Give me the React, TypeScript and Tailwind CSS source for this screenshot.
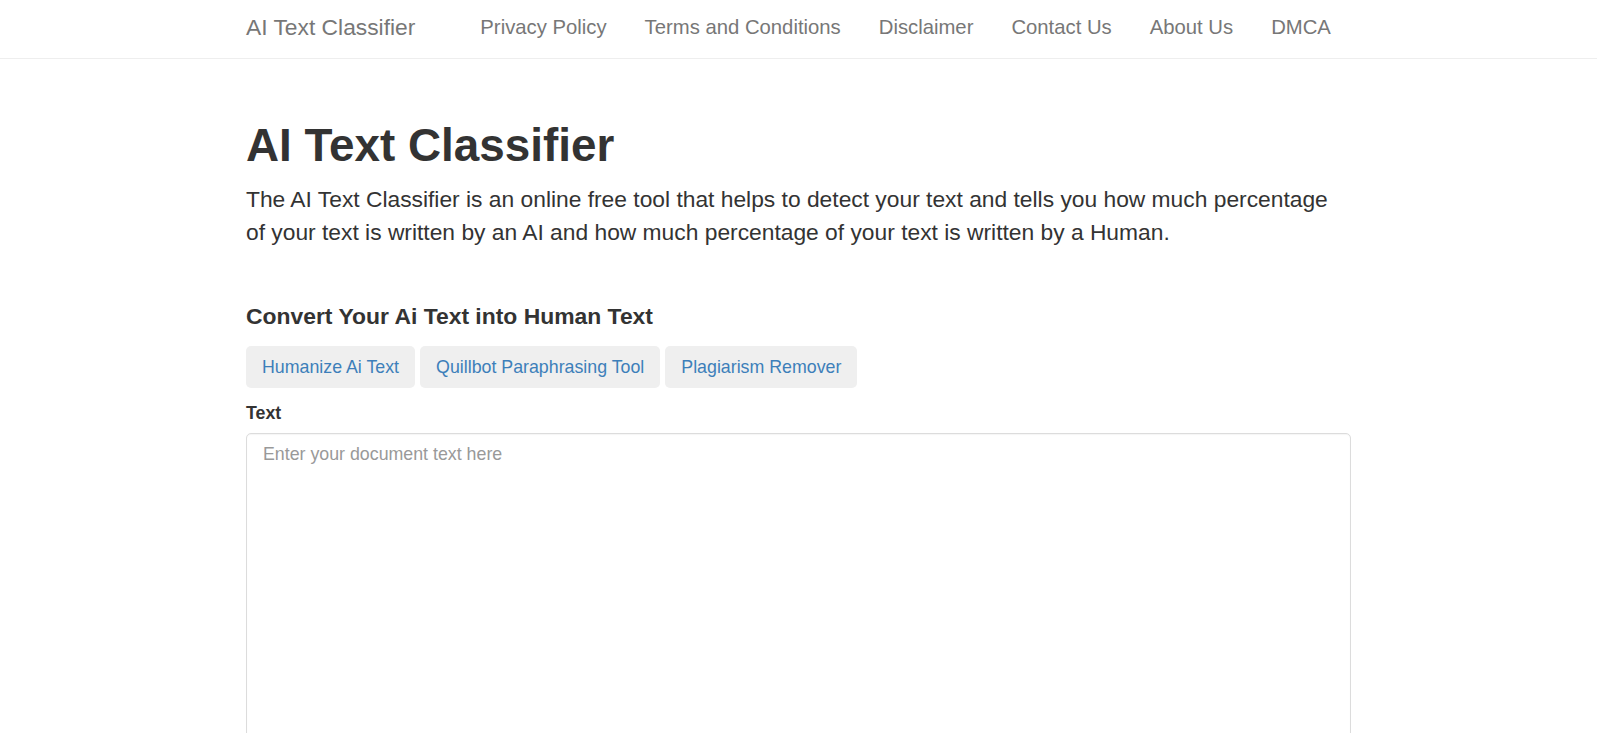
import { useState } from "react"

const navLinks = ["Privacy Policy", "Terms and Conditions", "Disclaimer", "Contact Us", "About Us", "DMCA"]

const tools = ["Humanize Ai Text", "Quillbot Paraphrasing Tool", "Plagiarism Remover"]

export default function App() {
    const [text, setText] = useState("")

    return (
        <div className="min-h-screen bg-white font-['Liberation_Sans',Arial,sans-serif] text-[#333]">
            {/* Navbar */}
            <nav className="h-[59px] border-b border-[#eeeeee] bg-white">
                <div className="mx-auto flex h-[58px] w-[1105px] items-center whitespace-nowrap pb-[4px]">
                    <a href="#" className="shrink-0 text-[22.8px] leading-none text-[#777]">
                        AI Text Classifier
                    </a>
                    <ul className="ml-[46px] flex shrink-0 items-center">
                        {navLinks.map((link) => (
                            <li key={link} className="shrink-0">
                                <a href="#" className="block whitespace-nowrap px-[19px] text-[20.3px] leading-none text-[#777]">
                                    {link}
                                </a>
                            </li>
                        ))}
                    </ul>
                </div>
            </nav>

            {/* Main */}
            <main className="mx-auto w-[1105px]">
                <h1 className="mt-[62px] text-[45.8px] font-bold leading-[49px]">AI Text Classifier</h1>
                <p className="mt-[13px] text-[22.8px] leading-[32.6px]">
                    The AI Text Classifier is an online free tool that helps to detect your text and tells you how much
                    percentage of your text is written by an AI and how much percentage of your text is written by a Human.
                </p>

                <h3 className="mt-[56px] text-[22.9px] font-bold leading-[25px]">Convert Your Ai Text into Human Text</h3>

                <div className="mt-[17px] flex gap-[5px]">
                    {tools.map((tool) => (
                        <a
                            key={tool}
                            href="#"
                            className="flex h-[42px] items-center rounded-[5px] bg-[#efefef] px-[16px] text-[17.8px] text-[#3d7fba]"
                        >
                            {tool}
                        </a>
                    ))}
                </div>

                <label className="mt-[15px] block text-[17.8px] font-bold leading-[20px]">Text</label>
                <textarea
                    value={text}
                    onChange={(e) => setText(e.target.value)}
                    placeholder="Enter your document text here"
                    className="mt-[10px] block h-[420px] w-full resize-none rounded-[5px] border border-[#dcdcdc] px-[16px] py-[8px] text-[17.8px] leading-[25px] text-[#555] shadow-[inset_0_1px_1px_rgba(0,0,0,0.04)] outline-none placeholder:text-[#999]"
                />
            </main>
        </div>
    )
}
